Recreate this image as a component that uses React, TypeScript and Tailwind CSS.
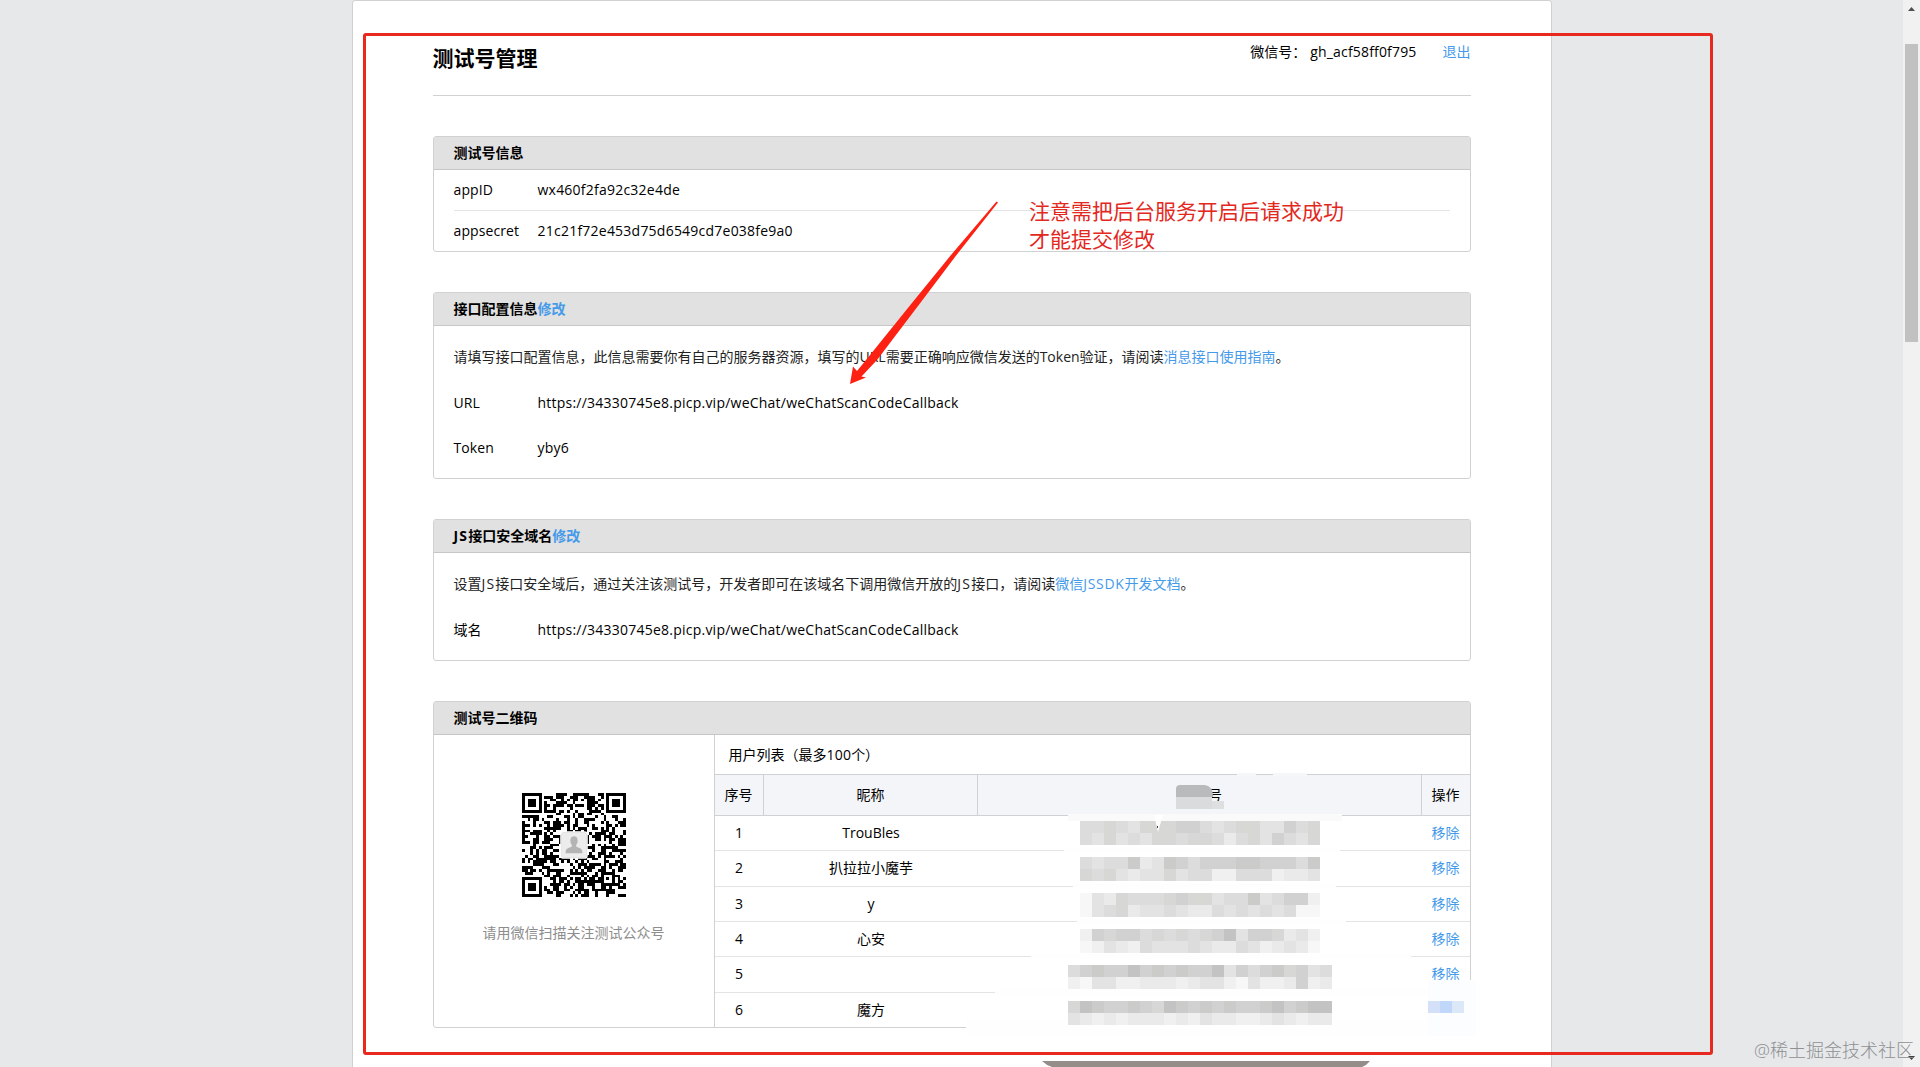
import type { ReactNode } from 'react';

interface TestUser {
  id: number;
  name: string;
  height: string;
}

const USERS: TestUser[] = [
  { id: 1, name: 'TrouBles', height: 'h-[35px]' },
  { id: 2, name: '扒拉拉小魔芋', height: 'h-[36px]' },
  { id: 3, name: 'y', height: 'h-[35px]' },
  { id: 4, name: '心安', height: 'h-[35px]' },
  { id: 5, name: '', height: 'h-[36px]' },
  { id: 6, name: '魔方', height: 'h-[34px]' },
];

// grey level per 12px tile
const MOSAIC: { x: number; y: number; tiles: string }[] = [
  { x: 1080, y: 821, tiles: 'ddcdecccbbdedcceebdc' },
  { x: 1080, y: 833, tiles: 'decedeccdccdfdcebdec' },
  { x: 1080, y: 857, tiles: 'deddafeabdbbbaabbbda' },
  { x: 1080, y: 869, tiles: 'cdcefeeceddggdddgffe' },
  { x: 1080, y: 893, tiles: 'hefcdddcbcceddaedbbg' },
  { x: 1080, y: 905, tiles: 'hedcfeedeffdedededhh' },
  { x: 1080, y: 929, tiles: 'gbcbbdcdcdcbZebbcfeg' },
  { x: 1080, y: 941, tiles: 'hgefgdeeedeffdegfefh' },
  { x: 1068, y: 965, tiles: 'dbabbZbababbZebdbacbed' },
  { x: 1068, y: 977, tiles: 'gheeggfffgfeegheggfbgf' },
  { x: 1068, y: 1001, tiles: 'cZabbabcZabababbaZbaZZ' },
  { x: 1068, y: 1013, tiles: 'efgfgfffgfgeffggfefgff' },
];

const TONES: Record<string, string> = {
  Z: '#c3c3c4',
  a: '#cbcbca',
  b: '#d1d1d1',
  c: '#d7d7d6',
  d: '#dcdcdc',
  e: '#e3e3e3',
  f: '#eaeaea',
  g: '#f0f0f0',
  h: '#f7f7f7',
};

const QR_SIZE = 37;

function inFinder(row: number, col: number) {
  const edge = QR_SIZE - 8;
  return (row < 8 && col < 8) || (row < 8 && col >= edge) || (row >= edge && col < 8);
}

function qrModules() {
  const cells: { row: number; col: number }[] = [];
  let seed = 20817;
  for (let row = 0; row < QR_SIZE; row++) {
    for (let col = 0; col < QR_SIZE; col++) {
      seed = (seed * 1103515245 + 12345) % 2147483648;
      if (inFinder(row, col)) continue;
      if ((seed >> 12) % 100 < 51) cells.push({ row, col });
    }
  }
  return cells;
}

function Finder({ x, y }: { x: number; y: number }) {
  return (
    <g>
      <rect x={x} y={y} width="7" height="7" fill="#000" />
      <rect x={x + 1} y={y + 1} width="5" height="5" fill="#fff" />
      <rect x={x + 2} y={y + 2} width="3" height="3" fill="#000" />
    </g>
  );
}

function QrCode() {
  return (
    <svg className="size-[104px]" viewBox="0 0 37 37" shapeRendering="crispEdges">
      {qrModules().map((m) => (
        <rect key={`${m.row}-${m.col}`} x={m.col} y={m.row} width="1" height="1" />
      ))}
      <Finder x={0} y={0} />
      <Finder x={30} y={0} />
      <Finder x={0} y={30} />
      <rect x="28" y="28" width="5" height="5" />
      <rect x="29" y="29" width="3" height="3" fill="#fff" />
      <rect x="30" y="30" width="1" height="1" />
      <g shapeRendering="auto">
        <rect x="13.6" y="13.6" width="9.8" height="9.8" rx="1.2" fill="#fff" />
        <rect x="14" y="14" width="9" height="9" rx="1" fill="#ececec" stroke="#dcdcdc" strokeWidth="0.25" />
        <ellipse cx="18.5" cy="17" rx="1.3" ry="1.6" fill="#b4b4b4" />
        <path d="M15.500 21.400c0-1.500.7-1.900 2.200-2.300v-1h1.600v1c1.500.4 2.200.8 2.200 2.300z" fill="#b4b4b4" />
      </g>
    </svg>
  );
}

function Link({ children }: { children: ReactNode }) {
  return (
    <a href="#" className="text-[#459ae9]">
      {children}
    </a>
  );
}

function Js() {
  return <span className="tracking-[1.2px]">JS</span>;
}

function Panel({ title, action, className, children }: { title: ReactNode; action?: string; className: string; children: ReactNode }) {
  return (
    <section className={`rounded-[3px] border border-[#d0d1d2] ${className}`}>
      <h3 className="flex h-[33px] items-center border-b border-[#c6c6c6] bg-[#e1e1e1] pl-5 font-bold">
        {title}
        {action && <Link>{action}</Link>}
      </h3>
      {children}
    </section>
  );
}

function Field({ label, value, className }: { label: string; value: string; className: string }) {
  return (
    <div className={`flex items-center ${className}`}>
      <span className="w-[84px] shrink-0 tracking-[0.1px]">{label}</span>
      <span className="tracking-[0.23px]">{value}</span>
    </div>
  );
}

function UserTable() {
  return (
    <div className="flex-1 border-l border-[#d0d1d2]">
      <p className="flex h-[39px] items-center pl-[14px]">
        用户列表（最多<span className="tracking-[0.2px]">100</span>个）
      </p>
      <div className="flex h-[42px] border-y border-[#d0d1d2] bg-[#f4f5f9] text-center leading-10">
        <span className="w-[49px] border-r border-[#d0d1d2]">序号</span>
        <span className="w-[214px] border-r border-[#d0d1d2] pl-px">昵称</span>
        <span className="flex-1 pl-8">号</span>
        <span className="w-[49px] border-l border-[#d0d1d2]">操作</span>
      </div>
      {USERS.map((user) => (
        <div
          key={user.id}
          className={`flex items-center border-b border-[#e3e4e5] pb-px text-center last:border-b-0 ${user.height}`}
        >
          <span className="w-[49px]">{user.id}</span>
          <span className="w-[214px] pl-px">{user.name}</span>
          <span className="flex-1" />
          <span className="w-[49px] pl-px">
            <Link>移除</Link>
          </span>
        </div>
      ))}
    </div>
  );
}

function Redaction() {
  return (
    <svg className="pointer-events-none absolute left-0 top-0 h-[1067px] w-[1920px]" viewBox="0 0 1920 1067" shapeRendering="crispEdges">
      <rect x="1237" y="773" width="19" height="3" fill="#f6f7f9" />
      <rect x="1273" y="773" width="34" height="3" fill="#f6f7f9" />
      <rect x="1068" y="814" width="274" height="7" fill="#fafafb" />
      <rect x="1064" y="848" width="276" height="5" fill="#fefefe" />
      <rect x="1073" y="884" width="263" height="5" fill="#fefefe" />
      <rect x="1077" y="919" width="269" height="5" fill="#fefefe" />
      <rect x="1031" y="954" width="380" height="5" fill="#fefefe" />
      <rect x="995" y="989" width="480" height="6" fill="#fefefe" />
      <rect x="966" y="1018" width="510" height="18" fill="#fefefe" />
      <rect x="1428" y="980" width="48" height="56" fill="#fcfdfe" />
      {MOSAIC.map((strip) =>
        strip.tiles.split('').map((tone, i) => (
          <rect key={`${strip.y}-${i}`} x={strip.x + i * 12} y={strip.y} width="12" height="12" fill={TONES[tone]} />
        )),
      )}
      <rect x="1176" y="797" width="36" height="12" fill="#dadbdc" />
      <rect x="1212" y="801" width="12" height="8" fill="#dedfe1" />
      <path d="M1176 797V789q0-4 4-4h25q8 1 8 12z" fill="#b9babc" shapeRendering="auto" />
      <path d="M1154 815h9l-5 17z" fill="#fff" shapeRendering="auto" />
      <rect x="1157" y="826" width="1" height="2" fill="#444" />
      <rect x="1428" y="1001" width="12" height="12" fill="#d3e0f8" />
      <rect x="1440" y="1001" width="12" height="12" fill="#c0d7f9" />
      <rect x="1452" y="1001" width="12" height="12" fill="#dbe8f8" />
    </svg>
  );
}

function Annotations() {
  return (
    <>
      <div className="absolute left-[363px] top-[33px] h-[1022px] w-[1350px] rounded-[3px] border-3 border-[#e8291f]" />
      <svg className="pointer-events-none absolute left-[840px] top-[190px] h-[200px] w-[170px]" viewBox="840 190 170 200">
        <path d="M996.5 201.500 951 255 909.500 306 866 360 857 371 853 366.500 850 384 866 377.500 861.500 376.500 877 360 918 306 956.500 255 998 202.500Z" fill="#fd2113" />
      </svg>
      <p className="absolute left-[1029px] top-[197px] text-[21px] leading-7 text-[#e3281e]">
        注意需把后台服务开启后请求成功
        <br />
        才能提交修改
      </p>
      <svg className="absolute left-[1042px] top-[1061px] h-[6px] w-[328px]" viewBox="0 0 328 6">
        <path d="M0 0h328q-3 4-8 6H10Q4 4 0 0z" fill="#958d8a" />
      </svg>
    </>
  );
}

function Scrollbar() {
  return (
    <div className="flex h-full w-[17px] flex-col items-center justify-between bg-[#f1f1f1]">
      <div className="flex flex-col items-center">
        <svg className="mt-[7px] h-1 w-[7px]" viewBox="0 0 7 4">
          <path d="M0 4 3.500 0 7 4z" fill="#505050" />
        </svg>
        <div className="mt-[33px] h-[298px] w-[13px] bg-[#c1c1c1]" />
      </div>
      <svg className="mb-[7px] h-1 w-[7px]" viewBox="0 0 7 4">
        <path d="M0 0h7L3.500 4z" fill="#404040" />
      </svg>
    </div>
  );
}

export default function App() {
  return (
    <div className="relative flex h-[1067px] w-[1920px] overflow-hidden bg-[#e6e8ea] font-['Open_Sans','Noto_Sans_CJK_SC',sans-serif] text-sm leading-5 text-black">
      <div className="flex flex-1 justify-center">
        <main className="h-[1100px] w-[1200px] rounded-t-[3px] border border-[#d0d1d2] bg-white px-20">
          <header className="flex h-[95px] justify-between border-b border-[#d0d1d2]">
            <h2 className="pt-[42px] text-[21px] font-bold leading-[30px]">测试号管理</h2>
            <div className="flex pt-[41px]">
              <span>微信号：</span>
              <span className="ml-1 tracking-[0.17px]">gh_acf58ff0f795</span>
              <span className="ml-[26px]">
                <Link>退出</Link>
              </span>
            </div>
          </header>

          <Panel title="测试号信息" className="mt-10 h-[116px]">
            <div className="px-5">
              <Field label="appID" value="wx460f2fa92c32e4de" className="h-[41px] border-b border-[#e3e4e5]" />
              <Field label="appsecret" value="21c21f72e453d75d6549cd7e038fe9a0" className="h-10" />
            </div>
          </Panel>

          <Panel title="接口配置信息" action="修改" className="mt-10 h-[187px]">
            <div className="px-5 pt-[21px]">
              <p className="text-[#222]">
                请填写接口配置信息，此信息需要你有自己的服务器资源，填写的URL需要正确响应微信发送的Token验证，请阅读
                <Link>消息接口使用指南</Link>。
              </p>
              <Field label="URL" value="https://34330745e8.picp.vip/weChat/weChatScanCodeCallback" className="mt-[13px] h-[45px]" />
              <Field label="Token" value="yby6" className="h-[45px]" />
            </div>
          </Panel>

          <Panel
            title={
              <>
                <Js />
                接口安全域名
              </>
            }
            action="修改"
            className="mt-10 h-[142px]"
          >
            <div className="px-5 pt-[21px]">
              <p className="text-[#222]">
                设置
                <Js />
                接口安全域后，通过关注该测试号，开发者即可在该域名下调用微信开放的
                <Js />
                接口，请阅读
                <Link>
                  微信<span className="tracking-[0.7px]">JSSDK</span>开发文档
                </Link>
                。
              </p>
              <Field label="域名" value="https://34330745e8.picp.vip/weChat/weChatScanCodeCallback" className="mt-[13px] h-[45px]" />
            </div>
          </Panel>

          <Panel title="测试号二维码" className="mt-10 h-[327px]">
            <div className="flex h-[292px]">
              <div className="flex w-[280px] flex-col items-center pt-[58px]">
                <QrCode />
                <p className="mt-[26px] text-[#8d8d8d]">请用微信扫描关注测试公众号</p>
              </div>
              <UserTable />
            </div>
          </Panel>
        </main>
      </div>
      <Scrollbar />
      <Redaction />
      <Annotations />
      <p className="absolute left-[1754px] top-[1036px] whitespace-nowrap text-[18px] font-light leading-7 text-[#8e9092]">@稀土掘金技术社区</p>
    </div>
  );
}
